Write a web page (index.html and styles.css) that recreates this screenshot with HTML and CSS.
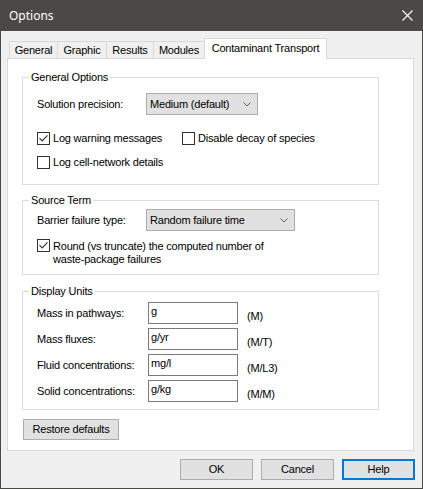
FILE: index.html
```html
<!DOCTYPE html>
<html lang="en">
<head>
<meta charset="utf-8">
<title>Options</title>
<link rel="stylesheet" href="styles.css">
</head>
<body>
<div class="window">
  <div class="titlebar">
    <span class="title">Options</span>
    <svg class="close" width="11" height="11" viewBox="0 0 11 11"><path d="M0.5 0.5L10.5 10.5M10.5 0.5L0.5 10.5" stroke="#ffffff" stroke-width="1.1" fill="none"/></svg>
  </div>
  <div class="client">
    <div class="tabs">
      <div class="tab t-general">General</div>
      <div class="tab t-graphic">Graphic</div>
      <div class="tab t-results">Results</div>
      <div class="tab t-modules">Modules</div>
      <div class="tab active t-ct">Contaminant Transport</div>
    </div>
    <div class="panel">
      <fieldset class="group g-general">
        <legend>General Options</legend>
        <div class="gbody gb-general">
          <div class="row">
            <span class="lbl">Solution precision:</span>
            <div class="combo combo-precision">
              <span>Medium (default)</span>
              <svg class="chev" width="8" height="5" viewBox="0 0 8 5"><path d="M0.5 0.5L4 4L7.5 0.5" stroke="#5f5f5f" fill="none"/></svg>
            </div>
          </div>
          <div class="checks">
            <div class="check">
              <span class="box"><svg width="11" height="11" viewBox="0 0 11 11"><path d="M1.5 5.2L4.2 7.9L9.5 2.4" stroke="#333" stroke-width="1.1" fill="none"/></svg></span>
              <span>Log warning messages</span>
            </div>
            <div class="check">
              <span class="box"></span>
              <span>Disable decay of species</span>
            </div>
            <div class="check">
              <span class="box"></span>
              <span>Log cell-network details</span>
            </div>
          </div>
        </div>
      </fieldset>

      <fieldset class="group g-source">
        <legend>Source Term</legend>
        <div class="gbody gb-source">
          <div class="row">
            <span class="lbl">Barrier failure type:</span>
            <div class="combo combo-barrier">
              <span>Random failure time</span>
              <svg class="chev" width="8" height="5" viewBox="0 0 8 5"><path d="M0.5 0.5L4 4L7.5 0.5" stroke="#5f5f5f" fill="none"/></svg>
            </div>
          </div>
          <div class="check multi">
            <span class="box"><svg width="11" height="11" viewBox="0 0 11 11"><path d="M1.5 5.2L4.2 7.9L9.5 2.4" stroke="#333" stroke-width="1.1" fill="none"/></svg></span>
            <span class="wrap">Round (vs truncate) the computed number of waste-package failures</span>
          </div>
        </div>
      </fieldset>

      <fieldset class="group g-units">
        <legend>Display Units</legend>
        <div class="gbody gb-units">
          <div class="urow"><span class="ulbl">Mass in pathways:</span><input class="tb" type="text" value="g"><span class="unit">(M)</span></div>
          <div class="urow"><span class="ulbl">Mass fluxes:</span><input class="tb" type="text" value="g/yr"><span class="unit">(M/T)</span></div>
          <div class="urow"><span class="ulbl">Fluid concentrations:</span><input class="tb" type="text" value="mg/l"><span class="unit">(M/L3)</span></div>
          <div class="urow"><span class="ulbl">Solid concentrations:</span><input class="tb" type="text" value="g/kg"><span class="unit">(M/M)</span></div>
        </div>
      </fieldset>

      <button class="btn restore" type="button">Restore defaults</button>
    </div>
    <div class="actions">
      <button class="btn act" type="button">OK</button>
      <button class="btn act" type="button">Cancel</button>
      <button class="btn act default" type="button">Help</button>
    </div>
  </div>
</div>
</body>
</html>
```

FILE: styles.css
```css
* { box-sizing: border-box; }

html, body {
  margin: 0;
  padding: 0;
  background: #f0f0f0;
}

body {
  font-family: "Liberation Sans", Arial, sans-serif;
  font-size: 11px;
  letter-spacing: -0.2px;
  color: #000;
}

.window {
  width: 423px;
  height: 489px;
  display: flex;
  flex-direction: column;
}

.titlebar {
  height: 31px;
  flex: none;
  background: #4b4946;
  display: flex;
  align-items: center;
  justify-content: space-between;
  padding: 0 10px 0 9px;
}

.title {
  font-family: "Noto Sans", "Open Sans", sans-serif;
  font-size: 12px;
  letter-spacing: 0;
  color: #ffffff;
  line-height: 16px;
  margin-top: 1px;
}

.close { display: block; }

.client {
  flex: 1;
  background: #f0f0f0;
  border: 1px solid #4b4946;
  border-top: 0;
  padding-top: 7px;
  display: flex;
  flex-direction: column;
}

/* Tabs */
.tabs {
  height: 20px;
  display: flex;
  align-items: flex-end;
  margin-left: 8px;
}

.tab {
  height: 17px;
  border: 1px solid #d9d9d9;
  border-bottom: 0;
  background: #f0f0f0;
  display: flex;
  align-items: center;
  justify-content: center;
  line-height: 15px;
  margin-left: -1px;
}

.t-general { width: 49px; margin-left: 0; }
.t-graphic { width: 50px; }
.t-results { width: 48px; }
.t-modules { width: 52px; }
.t-ct { width: 123px; }

.tab.active {
  position: relative;
  z-index: 1;
  height: 21px;
  margin-bottom: -1px;
  background: #ffffff;
  align-items: flex-start;
  padding-top: 2px;
  line-height: 14px;
}

/* Panel */
.panel {
  height: 393px;
  flex: none;
  margin: 0 8px 0 6px;
  background: #ffffff;
  border: 1px solid #d9d9d9;
  padding: 11px 0 10px 14px;
  display: flex;
  flex-direction: column;
  align-items: flex-start;
}

.group {
  width: 357px;
  margin: 0;
  padding: 0;
  min-width: 0;
  border: 1px solid #dcdcdc;
}

.group legend {
  margin-left: 6px;
  padding: 0 2px;
  line-height: 15px;
  height: 15px;
}

.g-general { margin-bottom: 8px; }
.g-source { margin-bottom: 9px; }
.g-units { margin-bottom: 9px; }

.gbody { padding-left: 14px; }
.gb-general { padding-top: 8px; padding-bottom: 15px; }
.gb-source { padding-top: 1px; padding-bottom: 8px; }
.gb-units {
  padding-top: 3px;
  padding-bottom: 7px;
  display: flex;
  flex-direction: column;
  gap: 4px;
}

.row {
  display: flex;
  align-items: center;
  height: 22px;
}

.lbl {
  width: 109px;
  flex: none;
  line-height: 13px;
}

.combo {
  height: 22px;
  background: #e1e1e1;
  border: 1px solid #adadad;
  display: flex;
  align-items: center;
  padding-left: 3px;
  line-height: 13px;
}

.combo-precision { width: 112px; }
.combo-barrier { width: 149px; }

.chev {
  display: block;
  margin-left: auto;
  margin-right: 6px;
}

.checks {
  margin-top: 17px;
  display: grid;
  grid-template-columns: 145px auto;
  grid-auto-rows: 13px;
  row-gap: 11px;
}

.check {
  display: flex;
  align-items: center;
  gap: 3px;
  line-height: 13px;
  height: 13px;
}

.box {
  width: 13px;
  height: 13px;
  flex: none;
  border: 1px solid #333333;
  background: #ffffff;
  display: block;
}

.box svg { display: block; }

.check.multi {
  margin-top: 8px;
  align-items: flex-start;
  height: auto;
}

.wrap {
  width: 232px;
  margin-top: 1px;
  line-height: 13px;
}

/* Units */
.urow {
  display: flex;
  align-items: center;
  height: 22px;
}

.ulbl {
  width: 111px;
  flex: none;
  line-height: 13px;
}

.tb {
  width: 90px;
  height: 22px;
  margin: 0;
  border: 1px solid #7a7a7a;
  border-radius: 0;
  background: #ffffff;
  padding: 0 1px 4px 2px;
  font: inherit;
  letter-spacing: inherit;
  color: #000;
  outline: none;
}

.unit {
  margin-left: 9px;
  padding-top: 6px;
  line-height: 13px;
}

/* Buttons */
.btn {
  height: 21px;
  margin: 0;
  padding: 0;
  background: #e1e1e1;
  border: 1px solid #adadad;
  border-radius: 0;
  font: inherit;
  letter-spacing: inherit;
  color: #000;
  line-height: 13px;
}

.restore {
  width: 96px;
  margin-left: 1px;
}

.actions {
  display: flex;
  justify-content: flex-end;
  gap: 8px;
  margin: 8px 7px 0 0;
}

.act { width: 73px; }

.act.default {
  border: 2px solid #0078d7;
}
```
